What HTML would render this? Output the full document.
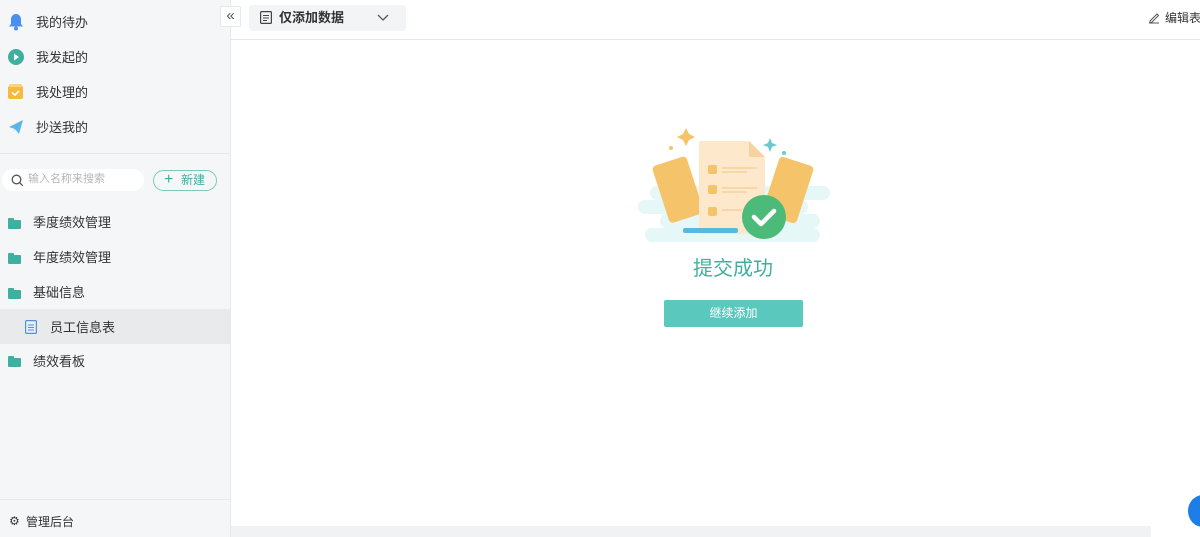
<!DOCTYPE html>
<html><head><meta charset="utf-8"><style>
*{margin:0;padding:0;box-sizing:border-box}
body{width:1200px;height:537px;overflow:hidden;background:#fff;font-family:"Liberation Sans","Noto Sans CJK SC",sans-serif;font-size:13px;color:#333;position:relative}
.sb{position:absolute;left:0;top:0;width:231px;height:537px;background:#f5f6f8;border-right:1px solid #e6e8eb}
.it{position:absolute;left:36px;font-size:13px;color:#333;line-height:15px}
.ic{position:absolute;left:8px}
.fo{position:absolute;left:8px;width:13px;height:9px;background:#3fb0a0;border-radius:1px}
.fo:before{content:"";position:absolute;left:0;top:-2px;width:6px;height:3px;background:#3fb0a0;border-radius:1px 1px 0 0}
</style></head><body>
<div class="sb">
 <svg class="ic" style="top:13px" width="16" height="18" viewBox="0 0 16 18"><path d="M8 1c3 0 5 2.5 5 5.5V11l2 2.5H1L3 11V6.5C3 3.5 5 1 8 1z" fill="#4a8ff0"/><circle cx="8" cy="15.5" r="2" fill="#4a8ff0"/></svg>
 <div class="it" style="top:15px">我的待办</div>
 <svg class="ic" style="top:49px" width="16" height="16"><circle cx="8" cy="8" r="8" fill="#3fb0a0"/><path d="M6 4.5l5 3.5-5 3.5z" fill="#fff"/></svg>
 <div class="it" style="top:50px">我发起的</div>
 <svg class="ic" style="top:84px" width="16" height="16"><rect x="0" y="2" width="15" height="13" rx="2" fill="#f7b93e"/><rect x="1" y="0" width="13" height="3" rx="1" fill="#fbd47a"/><path d="M4 8.5l3 2.5 4-4" stroke="#fff" stroke-width="1.6" fill="none"/></svg>
 <div class="it" style="top:85px">我处理的</div>
 <svg class="ic" style="top:119px" width="16" height="16"><path d="M1 8L15 1 11 15 7 10z" fill="#5ab8e8"/><path d="M7 10l8-9-10 12z" fill="#3a9ad0"/></svg>
 <div class="it" style="top:120px">抄送我的</div>
 <div style="position:absolute;left:0;top:153px;width:230px;border-top:1px solid #e6e8eb"></div>
 <div style="position:absolute;left:2px;top:169px;width:142px;height:22px;background:#fff;border-radius:11px"></div>
 <svg style="position:absolute;left:11px;top:174px" width="13" height="13"><circle cx="5.5" cy="5.5" r="4.3" stroke="#555" stroke-width="1.3" fill="none"/><path d="M8.7 8.7l3 3" stroke="#555" stroke-width="1.3"/></svg>
 <div style="position:absolute;left:28px;top:173px;font-size:11px;line-height:13px;color:#b5b5b5">输入名称来搜索</div>
 <div style="position:absolute;left:153px;top:170px;width:64px;height:21px;border:1px solid #7ccabd;border-radius:11px;color:#3fb0a0;font-size:12px;line-height:19px;padding-left:27px">新建</div>
 <div style="position:absolute;left:164px;top:173px;color:#3fb0a0;font-size:16px;line-height:14px">+</div>
 <div class="fo" style="top:220px"></div><div class="it" style="left:33px;top:215px">季度绩效管理</div>
 <div class="fo" style="top:255px"></div><div class="it" style="left:33px;top:250px">年度绩效管理</div>
 <div class="fo" style="top:290px"></div><div class="it" style="left:33px;top:285px">基础信息</div>
 <div style="position:absolute;left:0;top:309px;width:230px;height:35px;background:#e9eaec"></div>
 <svg style="position:absolute;left:25px;top:320px" width="12" height="14"><rect x=".6" y=".6" width="10.8" height="12.8" rx="1" fill="#e8f0fa" stroke="#5a8fd0" stroke-width="1.2"/><path d="M3 5h6M3 7.5h6M3 10h6" stroke="#5a8fd0"/></svg>
 <div class="it" style="left:50px;top:320px">员工信息表</div>
 <div class="fo" style="top:358px"></div><div class="it" style="left:33px;top:354px">绩效看板</div>
 <div style="position:absolute;left:0;top:499px;width:230px;border-top:1px solid #e6e8eb"></div>
 <div style="position:absolute;left:9px;top:514px;font-size:12px;line-height:14px;color:#333">⚙</div>
 <div style="position:absolute;left:26px;top:515px;font-size:12px;line-height:14px;color:#333">管理后台</div>
</div>
<div style="position:absolute;left:220px;top:6px;width:21px;height:21px;background:#fff;border:1px solid #e6e8eb;border-radius:2px;text-align:center;line-height:17px;font-size:15px;color:#555">«</div>
<div style="position:absolute;left:231px;top:39px;width:969px;border-top:1px solid #e8e8e8"></div>
<div style="position:absolute;left:249px;top:5px;width:157px;height:26px;background:#f3f4f6;border-radius:3px"></div>
<svg style="position:absolute;left:260px;top:11px" width="12" height="13"><rect x=".6" y=".6" width="10.8" height="11.8" rx="1" fill="none" stroke="#444" stroke-width="1.2"/><path d="M3 4.5h6M3 7h6M3 9.5h4" stroke="#444"/></svg>
<div style="position:absolute;left:279px;top:10px;font-size:13px;line-height:15px;font-weight:bold;color:#333">仅添加数据</div>
<svg style="position:absolute;left:377px;top:14px" width="12" height="8"><path d="M1 1l5 5 5-5" stroke="#555" stroke-width="1.3" fill="none"/></svg>
<svg style="position:absolute;left:1148px;top:12px" width="12" height="12"><path d="M1 11h10M2 9l7-7 1.5 1.5-7 7H2z" stroke="#555" fill="none"/></svg>
<div style="position:absolute;left:1165px;top:11px;font-size:12px;line-height:14px;color:#333;white-space:nowrap">编辑表</div>
<svg style="position:absolute;left:636px;top:126px" width="196" height="120" viewBox="636 126 196 120">
 <rect x="650" y="186" width="180" height="14" rx="7" fill="#e6f7f8"/><rect x="638" y="200" width="170" height="14" rx="7" fill="#e6f7f8"/><rect x="660" y="214" width="160" height="14" rx="7" fill="#e6f7f8"/><rect x="645" y="228" width="175" height="14" rx="7" fill="#e6f7f8"/>
 <path d="M686 128l3 6 6 3-6 3-3 6-3-6-6-3 6-3z" fill="#f5c46a"/><circle cx="671" cy="148" r="2" fill="#f5c46a"/>
 <path d="M770 138l2 5 5 2-5 2-2 5-2-5-5-2 5-2z" fill="#6cc9d0"/><circle cx="784" cy="153" r="2" fill="#6cc9d0"/>
 <g transform="rotate(-18 677 190)"><rect x="660" y="160" width="36" height="60" rx="4" fill="#f5c46a"/></g>
 <g transform="rotate(18 788 190)"><rect x="770" y="160" width="36" height="60" rx="4" fill="#f5c46a"/></g>
 <path d="M699 141h50l16 16v77h-66z" fill="#fde8cc"/><path d="M749 141v16h16z" fill="#f5d2a0"/>
 <rect x="708" y="165" width="9" height="9" rx="2" fill="#f5c46a"/><rect x="708" y="185" width="9" height="9" rx="2" fill="#f5c46a"/><rect x="708" y="207" width="9" height="9" rx="2" fill="#f5c46a"/>
 <path d="M722 168h35M722 172h25M722 188h35M722 192h25M722 210h20" stroke="#f5d7a8" stroke-width="2"/>
 <rect x="683" y="228" width="55" height="5" rx="2" fill="#5ab8e0"/>
 <circle cx="764" cy="217" r="22" fill="#4cba78"/><path d="M754 217l7 7 13-13" stroke="#fff" stroke-width="4.5" fill="none" stroke-linecap="round" stroke-linejoin="round"/>
</svg>
<div style="position:absolute;left:633px;top:256px;width:200px;text-align:center;font-size:20px;line-height:26px;color:#3fb0a0">提交成功</div>
<div style="position:absolute;left:664px;top:300px;width:139px;height:27px;background:#5ac8bd;border-radius:2px;color:#fff;text-align:center;line-height:27px;font-size:12px">继续添加</div>
<div style="position:absolute;left:231px;top:526px;width:920px;height:11px;background:#f1f2f4"></div>
<div style="position:absolute;left:1188px;top:495px;width:30px;height:32px;border-radius:50%;background:#1e7ee8"></div>
</body></html>
